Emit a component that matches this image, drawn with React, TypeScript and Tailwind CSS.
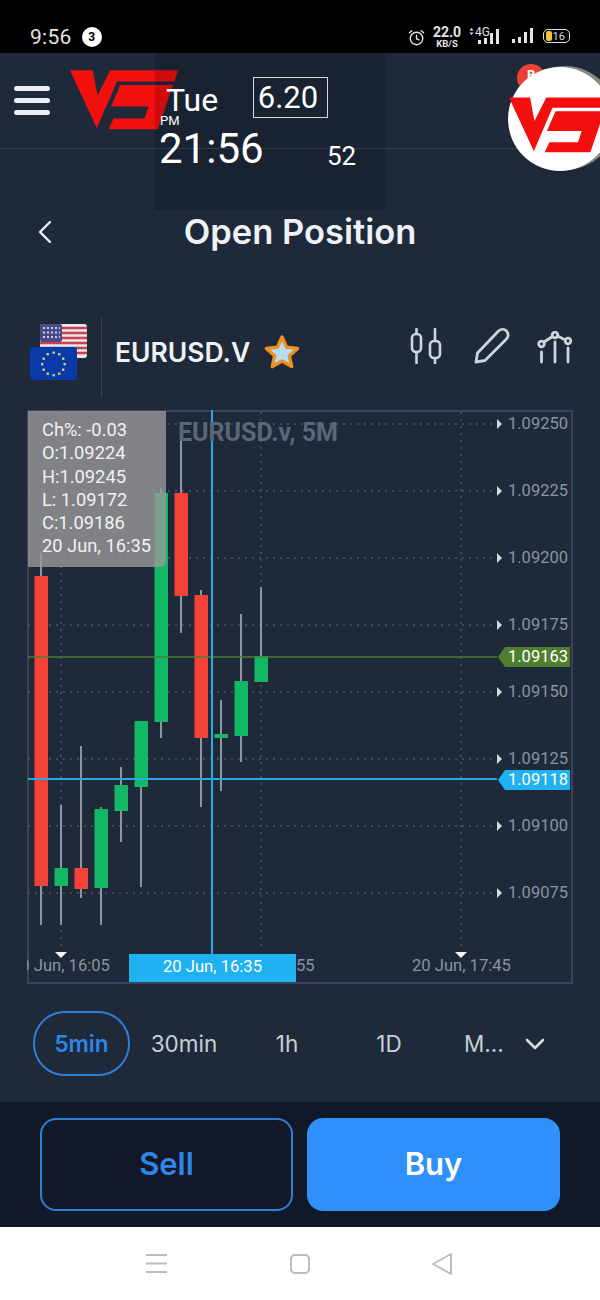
const candles = [
  { x: 41, top: 576, bottom: 886, hi: 553, lo: 925, up: false },
  { x: 61, top: 868, bottom: 886, hi: 805, lo: 925, up: true },
  { x: 81, top: 868, bottom: 889, hi: 746, lo: 898, up: false },
  { x: 101, top: 809, bottom: 888, hi: 807, lo: 925, up: true },
  { x: 121, top: 785, bottom: 811, hi: 767, lo: 842, up: true },
  { x: 141, top: 721, bottom: 787, hi: 721, lo: 887, up: true },
  { x: 161, top: 493, bottom: 722, hi: 488, lo: 738, up: true },
  { x: 181, top: 493, bottom: 596, hi: 440, lo: 633, up: false },
  { x: 201, top: 595, bottom: 738, hi: 590, lo: 807, up: false },
  { x: 221, top: 734, bottom: 738, hi: 700, lo: 791, up: true },
  { x: 241, top: 681, bottom: 736, hi: 614, lo: 762, up: true },
  { x: 261, top: 656, bottom: 682, hi: 587, lo: 656, up: true },
];

const prices = [
  { y: 424, label: "1.09250" },
  { y: 491, label: "1.09225" },
  { y: 558, label: "1.09200" },
  { y: 625, label: "1.09175" },
  { y: 692, label: "1.09150" },
  { y: 759, label: "1.09125" },
  { y: 826, label: "1.09100" },
  { y: 893, label: "1.09075" },
];

const info = ["Ch%: -0.03", "O:1.09224", "H:1.09245", "L: 1.09172", "C:1.09186", "20 Jun, 16:35"];

function VsLogo({ className }: { className: string }) {
  return (
    <svg className={className} viewBox="30 32 322 177" fill="#f40f0f">
      <path d="M30 32H98L112 108L150 32H352L341 65H170L110 205Z" />
      <path d="M180 76H337L292 208H145L160 176H252L264 140H152Z" />
    </svg>
  );
}

function StatusBar() {
  return (
    <div className="h-[53px] bg-black flex items-start pt-[20px] pl-[30px] pr-[30px] font-['Roboto',sans-serif] text-[#e4e4e4]">
      <span className="text-[21px] leading-[34px] tracking-[0.3px]">9:56</span>
      <span className="ml-[10px] mt-[7px] w-[20px] h-[20px] rounded-full bg-white text-black text-[12px] font-bold flex items-center justify-center">3</span>
      <div className="ml-auto flex items-start">
        <svg className="w-[17px] h-[17px] mt-[9px]" viewBox="0 0 18 18" fill="none" stroke="#e4e4e4" strokeWidth="1.5" strokeLinecap="round">
          <circle cx="9" cy="10" r="6.6" />
          <path d="M9 6.5V10.3L11.5 11.5M1.5 4L4 1.8M16.5 4L14 1.8" />
        </svg>
        <div className="ml-[8px] w-[28px] flex flex-col items-center font-bold">
          <span className="text-[14px] leading-[14px] mt-[5px]">22.0</span>
          <span className="text-[9.5px] leading-[9px]">KB/S</span>
        </div>
        <svg className="ml-[8px] w-[32px] h-[26px] mt-[4px]" viewBox="0 0 32 26" fill="#e4e4e4">
          <path d="M2.5 4L4.6 6.5H.4ZM2.5 11L.4 8.5H4.6Z" />
          <text x="6" y="12" fontSize="12" fontFamily="Roboto, sans-serif">4G</text>
          <rect x="9" y="16" width="3" height="4" />
          <rect x="15" y="14" width="3" height="6" />
          <rect x="21" y="9" width="3" height="11" />
          <rect x="27" y="5" width="3" height="15" />
        </svg>
        <svg className="ml-[11px] w-[21px] h-[16px] mt-[8px]" viewBox="0 0 21 16" fill="#e4e4e4">
          <rect x="0" y="11" width="3" height="4" />
          <rect x="6" y="9" width="3" height="6" />
          <rect x="12" y="4" width="3" height="11" />
          <rect x="18" y="0" width="3" height="15" />
        </svg>
        <div className="ml-[10px] mt-[9px] w-[27px] h-[14px] rounded-[5px] border border-[#e4e4e4] flex items-center text-[11px] leading-none">
          <span className="ml-[1.5px] w-[6px] h-[10px] rounded-[2px] bg-[#f0c929]" />
          <span className="ml-[1px] text-[#d8d8d8]">16</span>
        </div>
      </div>
    </div>
  );
}

function Header() {
  return (
    <div className="h-[96px] border-b border-[#39465a] flex items-start pl-[14px] pt-[17px]">
      <div className="mt-[16px] w-[36px] flex flex-col gap-[7px]">
        <span className="h-[5px] rounded-full bg-[#e8edf6]" />
        <span className="h-[5px] rounded-full bg-[#e8edf6]" />
        <span className="h-[5px] rounded-full bg-[#e8edf6]" />
      </div>
      <VsLogo className="ml-[20px] w-[108px] h-[60px]" />
    </div>
  );
}

function ClockOverlay() {
  return (
    <div className="absolute left-[155px] top-[53px] w-[230px] h-[157px] bg-black/15 font-['Roboto',sans-serif] text-white">
      <span className="absolute left-[11px] top-[28px] text-[32px] leading-[38px]">Tue</span>
      <span className="absolute left-[98px] top-[24px] w-[75px] h-[41px] border border-[#d5d8dc] pr-[5px] text-[31px] leading-[39px] text-center">6.20</span>
      <span className="absolute left-[5px] top-[61px] text-[13px] leading-[14px]">PM</span>
      <span className="absolute left-[4px] top-[71px] text-[42px] leading-[50px]">21:56</span>
      <span className="absolute left-[172px] top-[88px] text-[26px] leading-[30px]">52</span>
    </div>
  );
}

function Avatar() {
  return (
    <>
      <span className="absolute left-[517px] top-[64px] w-[28px] h-[28px] rounded-full bg-[#ea4335] text-white text-[13px] font-bold pl-[10px] font-['Roboto',sans-serif] leading-[22px]">
        B
      </span>
      <div className="absolute left-[513px] top-[66px] w-[104px] h-[104px] rounded-full bg-[#8d8a80]" />
      <div className="absolute left-[508px] top-[67px] w-[104px] h-[104px] rounded-full bg-white shadow-sm" />
      <VsLogo className="absolute left-[509px] top-[96px] w-[100px] h-[58px]" />
    </>
  );
}

function SymbolRow() {
  return (
    <div className="h-[84px] flex items-start pl-[30px] pr-[27px]">
      <svg className="mt-[6px] w-[58px] h-[58px]" viewBox="0 0 58 58">
        <rect x="10" y="2" width="47" height="34" rx="3" fill="#e8e6ea" />
        <path d="M10 6H57M10 11H57M10 16H57M10 21H57M10 26H57M10 31H57" stroke="#c8434f" strokeWidth="2.6" />
        <rect x="10" y="2" width="22" height="18" rx="2" fill="#4a4a86" />
        <path d="M13 6H30M13 10.5H30M13 15H30" stroke="#c9cbe0" strokeWidth="2" strokeDasharray="2 2" />
        <rect x="0" y="25" width="47" height="33" rx="3" fill="#0a3aa8" />
        <g fill="#cfc97c">
          <rect x="22.5" y="29.5" width="2.4" height="2.4" />
          <rect x="28" y="31" width="2.4" height="2.4" />
          <rect x="32" y="35.5" width="2.4" height="2.4" />
          <rect x="33.5" y="41" width="2.4" height="2.4" />
          <rect x="32" y="46.5" width="2.4" height="2.4" />
          <rect x="28" y="50.5" width="2.4" height="2.4" />
          <rect x="22.5" y="52" width="2.4" height="2.4" />
          <rect x="16.5" y="50.5" width="2.4" height="2.4" />
          <rect x="12.5" y="46.5" width="2.4" height="2.4" />
          <rect x="11" y="41" width="2.4" height="2.4" />
          <rect x="12.5" y="35.5" width="2.4" height="2.4" />
          <rect x="16.5" y="31" width="2.4" height="2.4" />
        </g>
      </svg>
      <div className="ml-[13px] mt-[2px] w-px h-[80px] bg-[#38455a]" />
      <span className="ml-[13px] mt-[20px] text-[26.5px] leading-[32px] font-semibold text-[#eef1f5] font-['Inter',sans-serif]">EURUSD.V</span>
      <svg className="ml-[13px] mt-[17px] w-[38px] h-[38px]" viewBox="0 0 38 38">
        <path d="M19 4L23.6 14.2L34.6 15.4L26.4 22.8L28.7 33.6L19 28.1L9.3 33.6L11.6 22.8L3.4 15.4L14.4 14.2Z" fill="#b5defa" stroke="#ee9120" strokeWidth="3.4" strokeLinejoin="round" />
      </svg>
      <div className="ml-auto flex items-start">
        <svg className="mt-[12px] w-[34px] h-[36px]" viewBox="0 0 34 36" fill="none" stroke="#ced4dc" strokeWidth="2.6" strokeLinecap="round">
          <rect x="2" y="6" width="9" height="18" rx="4" />
          <rect x="20" y="13" width="10" height="17" rx="4" />
          <path d="M6.5 1V6M6.5 24V35M25 1V13M25 30V36" />
        </svg>
        <svg className="ml-[29px] mt-[11px] w-[38px] h-[38px]" viewBox="0 0 38 38" fill="none" stroke="#ced4dc" strokeWidth="2.8" strokeLinejoin="round">
          <path d="M3 35L4.5 26L25 4.5C27.5 2 31 1.5 33.5 4C36 6.5 35.5 10 33 12.5L12 33.5Z" />
        </svg>
        <svg className="ml-[26px] mt-[15px] w-[36px] h-[33px]" viewBox="0 0 36 33" fill="none" stroke="#ced4dc" strokeWidth="2.8" strokeLinecap="round">
          <circle cx="4.5" cy="13" r="2.8" />
          <circle cx="18" cy="4" r="2.8" />
          <circle cx="31" cy="10" r="2.8" />
          <path d="M7 11L15.5 5.5M20.5 5L28.5 9M4.5 21V31M18 11V31M31 17V31" />
        </svg>
      </div>
    </div>
  );
}

function Chart() {
  return (
    <div className="relative mx-[27px] w-[546px] h-[574px] overflow-hidden ring-2 ring-inset ring-[#38445a] font-['Roboto',sans-serif]">
      <svg className="absolute inset-0 w-full h-full" viewBox="27 410 546 574">
        <g stroke="#3f4c5e" strokeWidth="2" strokeDasharray="2 5">
          {prices.map((p) => (
            <path key={p.y} d={`M28 ${p.y}H492`} />
          ))}
          <path d="M61 412V950M261 412V950M461 412V950" />
        </g>
        {candles.map((c) => (
          <g key={c.x}>
            <path d={`M${c.x} ${c.hi}V${c.lo}`} stroke="#8f959c" strokeWidth="2" />
            <rect x={c.x - 6.5} y={c.top} width="13.5" height={c.bottom - c.top} fill={c.up ? "#12b866" : "#f44336"} />
          </g>
        ))}
        <path d="M28 657H497" stroke="#4f7e30" strokeWidth="1.5" />
        <path d="M28 779H497M212 410V954" stroke="#29aae6" strokeWidth="2" />
        {prices.map((p) => (
          <path key={p.y} d={`M497 ${p.y - 5}L502 ${p.y}L497 ${p.y + 5}Z`} fill="#d5dae0" />
        ))}
        <path d="M505 647H570V667H505L498 657Z" fill="#4f7e30" />
        <path d="M505 770H570V790H505L498 780Z" fill="#1fb1f0" />
        <path d="M55 952H67L61 958ZM455 952H467L461 958Z" fill="#f2f4f6" />
      </svg>

      <span className="absolute left-[151px] top-[8px] text-[25px] leading-[30px] font-bold text-[#5a6778]">EURUSD.v, 5M</span>

      {prices.map((p) => (
        <span key={p.label} className="absolute left-[481px] text-[16.5px] leading-[20px] text-[#8b94a0]" style={{ top: p.y - 410 - 10 }}>
          {p.label}
        </span>
      ))}
      <span className="absolute left-[481px] top-[237px] text-[16.5px] leading-[20px] text-white">1.09163</span>
      <span className="absolute left-[481px] top-[360px] text-[16.5px] leading-[20px] text-white">1.09118</span>

      <span className="absolute left-[-16px] top-[546px] text-[16.6px] leading-[20px] text-[#8b94a0] whitespace-nowrap">20 Jun, 16:05</span>
      <span className="absolute left-[269px] top-[546px] text-[16.6px] leading-[20px] text-[#8b94a0] whitespace-nowrap">55</span>
      <span className="absolute left-[385px] top-[546px] text-[16.6px] leading-[20px] text-[#8b94a0] whitespace-nowrap">20 Jun, 17:45</span>
      <div className="absolute left-[102px] top-[544px] w-[167px] h-[28px] bg-[#1fb1f0] text-white text-[16.6px] leading-[26px] text-center">20 Jun, 16:35</div>

      <div className="absolute left-[1px] top-[1px] w-[138px] h-[156px] rounded-br-md bg-[#989898]/80 pl-[14px] pt-[7px] text-[18.3px] leading-[23.3px] text-[#f2f2f2]">
        {info.map((line) => (
          <div key={line} className="whitespace-nowrap">{line}</div>
        ))}
      </div>
    </div>
  );
}

function Timeframes() {
  return (
    <div className="mt-[27px] h-[65px] flex items-center pl-[33px] font-['Inter',sans-serif] text-[22.5px] text-[#c9ced6]">
      <span className="w-[97px] h-[65px] rounded-[32px] border-2 border-[#2f7fd6] text-[#2f86e8] font-semibold flex items-center justify-center">5min</span>
      <span className="ml-[3px] w-[102px] text-center">30min</span>
      <span className="w-[104px] text-center">1h</span>
      <span className="w-[100px] text-center">1D</span>
      <span className="ml-[25px]">M...</span>
      <svg className="ml-[21px] w-[20px] h-[14px]" viewBox="0 0 20 14" fill="none" stroke="#d5dae0" strokeWidth="2.6" strokeLinecap="round" strokeLinejoin="round">
        <path d="M2 3L10 11L18 3" />
      </svg>
    </div>
  );
}

function TradeButtons() {
  return (
    <div className="mt-[26px] h-[125px] bg-[#111827] flex items-start gap-[14px] px-[40px] pt-[16px] font-['Inter',sans-serif] text-[31px] font-semibold">
      <button className="w-[253px] h-[93px] rounded-[16px] border-2 border-[#2f7fd6] text-[#2f86e8]">Sell</button>
      <button className="w-[253px] h-[93px] rounded-[16px] bg-[#2f8ffb] text-white">Buy</button>
    </div>
  );
}

function NavBar() {
  return (
    <div className="h-[73px] bg-white flex items-center">
      <svg className="ml-[146px] w-[21px] h-[21px]" viewBox="0 0 21 21" fill="none" stroke="#bcbcbc" strokeWidth="2">
        <path d="M0 2H21M0 10.5H21M0 19H21" />
      </svg>
      <svg className="ml-[123px] w-[20px] h-[20px]" viewBox="0 0 20 20" fill="none" stroke="#bcbcbc" strokeWidth="2">
        <rect x="1" y="1" width="18" height="18" rx="4" />
      </svg>
      <svg className="ml-[121px] w-[22px] h-[24px]" viewBox="0 0 22 24" fill="none" stroke="#bcbcbc" strokeWidth="2" strokeLinejoin="round">
        <path d="M20 2V22L2 12Z" />
      </svg>
    </div>
  );
}

export default function App() {
  return (
    <div className="relative w-[600px] h-[1300px] overflow-hidden bg-[#1e2939]">
      <StatusBar />
      <Header />
      <div className="h-[167px] relative flex items-center justify-center">
        <svg className="absolute left-[38px] top-[71px] w-[14px] h-[24px]" viewBox="0 0 14 24" fill="none" stroke="#eef1f5" strokeWidth="2.4" strokeLinecap="round" strokeLinejoin="round">
          <path d="M12 2L2 12L12 22" />
        </svg>
        <span className="text-[34.5px] font-semibold text-[#eef1f5] font-['Inter',sans-serif] -mt-[1px]">Open Position</span>
      </div>
      <SymbolRow />
      <div className="h-[10px]" />
      <Chart />
      <Timeframes />
      <TradeButtons />
      <NavBar />
      <ClockOverlay />
      <Avatar />
    </div>
  );
}
